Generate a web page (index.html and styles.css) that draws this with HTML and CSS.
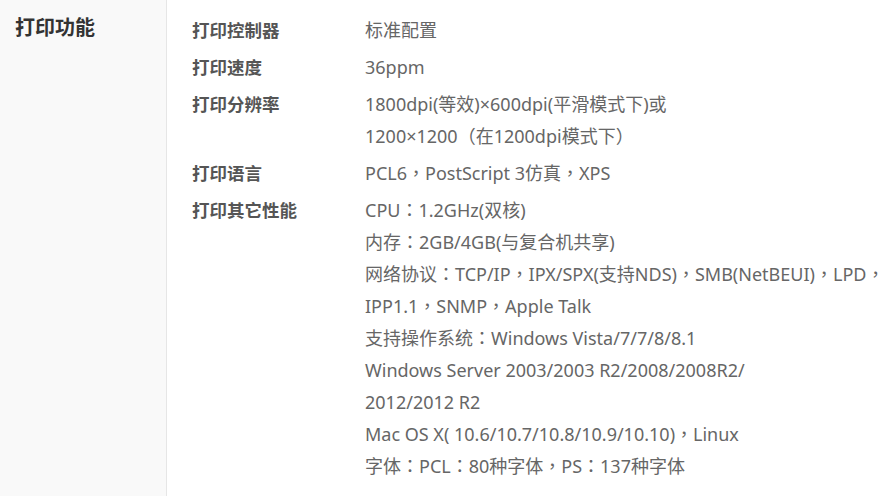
FILE: index.html
```html
<!DOCTYPE html>
<html lang="zh-CN">
<head>
<meta charset="utf-8">
<link rel="stylesheet" href="styles.css">
</head>
<body>
<div class="spec">
  <div class="side"><h2 class="side-title">打印功能</h2></div>
  <dl class="list">
    <div class="row"><dt class="label">打印控制器</dt><dd class="value">标准配置</dd></div>
    <div class="row"><dt class="label">打印速度</dt><dd class="value">36ppm</dd></div>
    <div class="row"><dt class="label">打印分辨率</dt><dd class="value">1800dpi(等效)×600dpi(平滑模式下)或<br>1200×1200<span class="p" lang="zh-TW">（</span>在1200dpi模式下<span class="p" lang="zh-TW">）</span></dd></div>
    <div class="row"><dt class="label">打印语言</dt><dd class="value">PCL6<span class="p" lang="zh-TW">，</span>PostScript 3仿真<span class="p" lang="zh-TW">，</span>XPS</dd></div>
    <div class="row"><dt class="label">打印其它性能</dt><dd class="value">CPU<span class="p" lang="zh-TW">：</span>1.2GHz(双核)<br>内存<span class="p" lang="zh-TW">：</span>2GB/4GB(与复合机共享)<br>网络协议<span class="p" lang="zh-TW">：</span>TCP/IP<span class="p" lang="zh-TW">，</span>IPX/SPX(支持NDS)<span class="p" lang="zh-TW">，</span>SMB(NetBEUI)<span class="p" lang="zh-TW">，</span>LPD<span class="p" lang="zh-TW">，</span><br>IPP1.1<span class="p" lang="zh-TW">，</span>SNMP<span class="p" lang="zh-TW">，</span>Apple Talk<br>支持操作系统<span class="p" lang="zh-TW">：</span>Windows Vista/7/7/8/8.1<br>Windows Server 2003/2003 R2/2008/2008R2/<br>2012/2012 R2<br>Mac OS X( 10.6/10.7/10.8/10.9/10.10)<span class="p" lang="zh-TW">，</span>Linux<br>字体<span class="p" lang="zh-TW">：</span>PCL<span class="p" lang="zh-TW">：</span>80种字体<span class="p" lang="zh-TW">，</span>PS<span class="p" lang="zh-TW">：</span>137种字体</dd></div>
  </dl>
</div>
</body>
</html>
```
FILE: styles.css
```css
html, body {
  margin: 0;
  padding: 0;
  background: #fff;
  font-family: "Noto Sans", "Noto Sans CJK SC", sans-serif;
}
.spec {
  display: flex;
  height: 496px;
}
.side {
  width: 166px;
  flex: none;
  background: #f9f9f9;
  border-right: 1px solid #e6e6e6;
}
.side-title {
  margin: 12px 0 0 15px;
  font-size: 20px;
  line-height: 32px;
  font-weight: bold;
  color: #333;
}
.list {
  margin: 14px 0 0 25px;
  padding: 0;
  display: flex;
  flex-direction: column;
  gap: 5px;
}
.row {
  display: flex;
}
.label {
  width: 173px;
  flex: none;
  font-size: 17.5px;
  line-height: 32px;
  font-weight: bold;
  color: #555;
}
.value {
  margin: 0;
  font-size: 18px;
  line-height: 32px;
  color: #666;
  white-space: nowrap;
}
.p {
  font-family: "Noto Sans CJK TC", sans-serif;
  line-height: 1;
}
```
